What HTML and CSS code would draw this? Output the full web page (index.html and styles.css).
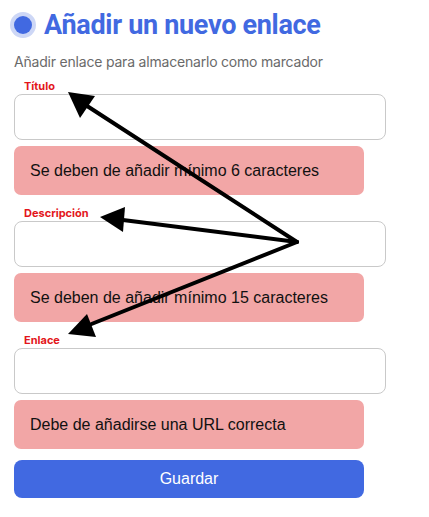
FILE: index.html
```html
<!DOCTYPE html>
<html lang="es">
<head>
<meta charset="utf-8">
<link rel="stylesheet" href="styles.css">
</head>
<body>
<div class="page">
  <div class="header">
    <span class="dot"><span class="dot-inner"></span></span>
    <h1 class="title">Añadir un nuevo enlace</h1>
  </div>
  <p class="subtitle">Añadir enlace para almacenarlo como marcador</p>
  <form class="form">
    <div class="field">
      <label class="label">Título</label>
      <div class="input"></div>
      <div class="error">Se deben de añadir mínimo 6 caracteres</div>
    </div>
    <div class="field">
      <label class="label">Descripción</label>
      <div class="input"></div>
      <div class="error">Se deben de añadir mínimo 15 caracteres</div>
    </div>
    <div class="field">
      <label class="label">Enlace</label>
      <div class="input"></div>
      <div class="error">Debe de añadirse una URL correcta</div>
    </div>
    <button type="button" class="btn">Guardar</button>
  </form>
  <svg class="arrows" width="429" height="517" viewBox="0 0 429 517">
    <g stroke="#000" stroke-width="4" stroke-linecap="round" fill="none">
      <line x1="297" y1="242" x2="84" y2="104"/>
      <line x1="297" y1="242" x2="115" y2="219"/>
      <line x1="297" y1="242" x2="84" y2="327"/>
    </g>
    <g fill="#000">
      <polygon points="68,92 95,96 80,118"/>
      <polygon points="100,217 125,207 123,232"/>
      <polygon points="68,334 87,314 96,337"/>
    </g>
  </svg>
</div>
</body>
</html>
```

FILE: styles.css
```css
* { box-sizing: border-box; }
html, body { margin: 0; padding: 0; background: #fff; }
body { width: 429px; height: 517px; overflow: hidden; }
.page { position: relative; width: 429px; height: 517px; }
.header {
  display: flex;
  align-items: center;
  gap: 8px;
  padding: 12px 0 0 10px;
  height: 38px;
}
.dot {
  width: 26px; height: 26px;
  border-radius: 50%;
  background: #cdd7f6;
  display: flex; align-items: center; justify-content: center;
  flex: none;
}
.dot-inner {
  width: 18px; height: 18px; border-radius: 50%;
  background: #4169e1;
}
.title {
  margin: 0;
  font-family: Roboto, "Liberation Sans", sans-serif;
  font-weight: 700;
  font-size: 27px;
  line-height: 26px;
  letter-spacing: -0.3px;
  color: #4169e1;
}
.subtitle {
  margin: 15px 0 0 14px;
  font-family: Inter, "Liberation Sans", sans-serif;
  font-size: 14px;
  line-height: 18px;
  letter-spacing: -0.2px;
  color: #6a6a6a;
}
.form { margin: 8px 0 0 14px; display: flex; flex-direction: column; }
.field { display: flex; flex-direction: column; margin-bottom: 11px; }
.label {
  margin-left: 10px;
  font-family: Inter, "Liberation Sans", sans-serif;
  font-weight: 700;
  font-size: 11px;
  line-height: 14px;
  color: #e3161b;
}
.input {
  margin-top: 1px;
  width: 372px; height: 46px;
  border: 1px solid #c9c9c9;
  border-radius: 8px;
  background: #fff;
}
.error {
  margin-top: 6px;
  width: 350px; height: 49px;
  padding: 0 16px;
  background: #f2a6a6;
  border-radius: 7px;
  font-family: "Liberation Sans", Arial, sans-serif;
  font-size: 16px;
  line-height: 49px;
  color: #111;
}
.btn {
  width: 350px; height: 38px;
  border: 0;
  border-radius: 8px;
  background: #4169e1;
  color: #fff;
  font-family: "Liberation Sans", Arial, sans-serif;
  font-size: 16px;
  padding: 0;
}
.arrows { position: absolute; left: 0; top: 0; pointer-events: none; }
```
